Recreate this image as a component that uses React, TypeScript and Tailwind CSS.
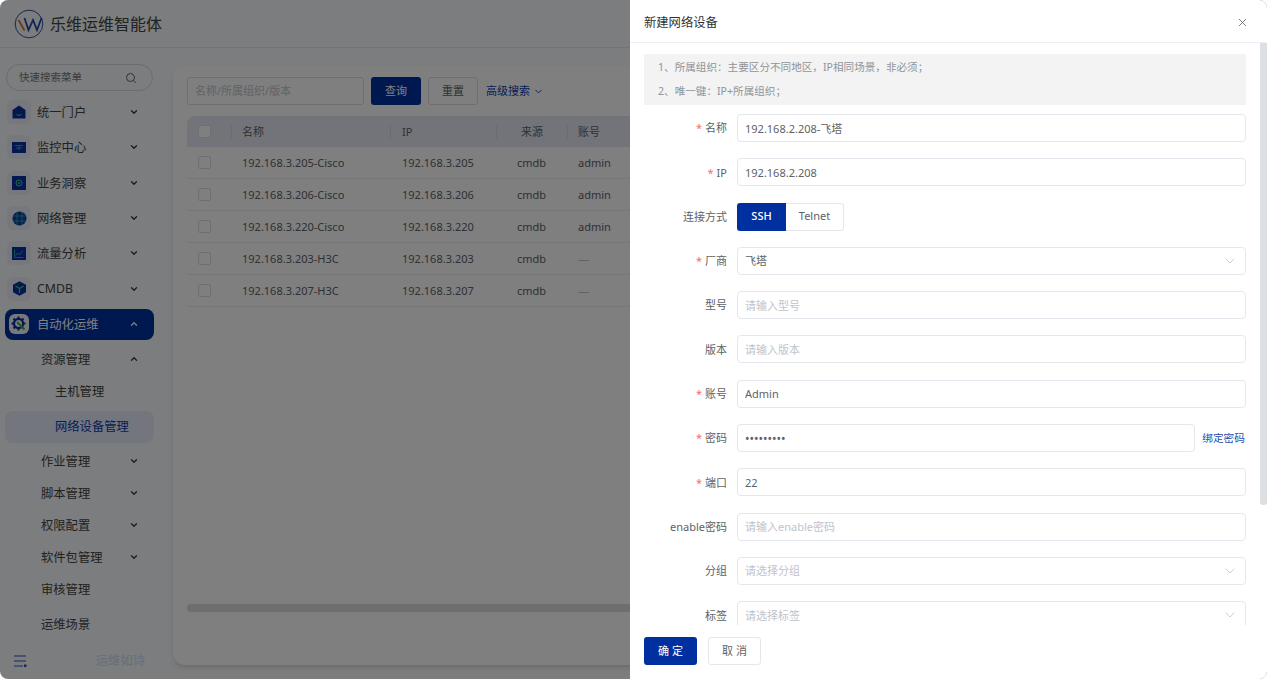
import { ChevronDown, ChevronUp, Search, X } from "lucide-react";

const FONT = "font-['Noto_Sans','Noto_Sans_CJK_SC',sans-serif]";

// ─── Sidebar icons ────────────────────────────────────────────────────────────

function Logo() {
  return (
    <svg width="30" height="30" viewBox="0 0 30 30" fill="none">
      <circle cx="15" cy="15" r="13.8" stroke="#2f4f9f" strokeWidth="1" />
      <path d="M4.5 11 10.5 21.5" stroke="#d9822b" strokeWidth="2" />
      <path d="M10.5 9 14.5 21 19 11 23 21 27.5 9" stroke="#2447a8" strokeWidth="1.8" />
    </svg>
  );
}

const tile = "w-[24px] h-[24px] shrink-0 rounded-md bg-[#eef0fb] flex items-center justify-center";

function PortalIcon() {
  return (
    <div className={tile}>
      <svg width="14" height="14" viewBox="0 0 14 14">
        <path d="M0.5 5 7 0.5 13.5 5V13.5H0.5Z" fill="#0a2f9e" />
        <path d="M4.5 9.5Q7 11.5 9.5 9.5" stroke="#3ecf9a" fill="none" />
      </svg>
    </div>
  );
}

function MonitorIcon() {
  return (
    <div className={tile}>
      <svg width="14" height="11" viewBox="0 0 14 11">
        <rect width="14" height="11" fill="#0a2f9e" />
        <path d="M3 3.5H11M7 3.5V8M4 6H10" stroke="#3ecf9a" strokeWidth="0.7" />
      </svg>
    </div>
  );
}

function InsightIcon() {
  return (
    <div className={tile}>
      <svg width="14" height="14" viewBox="0 0 14 14">
        <rect width="14" height="14" fill="#0a2f9e" />
        <circle cx="7" cy="7" r="3" stroke="#3ecf9a" fill="none" />
        <circle cx="7" cy="7" r="1" fill="#3ecf9a" />
      </svg>
    </div>
  );
}

function GlobeIcon() {
  return (
    <div className={tile}>
      <svg width="15" height="15" viewBox="0 0 15 15">
        <circle cx="7.5" cy="7.5" r="7" fill="#0a3a9e" />
        <path d="M0.5 5H14.5M0.5 10H14.5M5 0.8V14.2M10 0.8V14.2" stroke="#35c9a0" strokeWidth="0.7" />
      </svg>
    </div>
  );
}

function TrafficIcon() {
  return (
    <div className={tile}>
      <svg width="14" height="13" viewBox="0 0 14 13" fill="none">
        <rect width="14" height="13" fill="#0a2f9e" />
        <path d="M2.5 2.5V10.5H11.5" stroke="#3ecf9a" strokeWidth="0.7" />
        <path d="M3.5 8.5 6 6 8 7.5 11 3.5" stroke="#3ecf9a" strokeWidth="0.7" />
      </svg>
    </div>
  );
}

function CubeIcon() {
  return (
    <div className={tile}>
      <svg width="15" height="15" viewBox="0 0 15 15" fill="none">
        <path d="M7.5 0.3 14 3.8V11.2L7.5 14.7 1 11.2V3.8Z" fill="#0a2f9e" />
        <path d="M3.5 5 7.5 7.5 11.5 5M7.5 7.5V12" stroke="#3ecf6a" strokeWidth="1.2" />
      </svg>
    </div>
  );
}

function GearIcon() {
  return (
    <div className="w-[20px] h-[20px] shrink-0 rounded-md bg-[#f2f2f6] flex items-center justify-center">
      <svg width="16" height="16" viewBox="0 0 16 16" fill="none">
        <circle cx="7.5" cy="7.5" r="4.6" stroke="#0a2f9e" strokeWidth="2.2" />
        <path
          d="M7.5 0.5V2.5M7.5 12.5V14.5M0.5 7.5H2.5M12.5 7.5H14.5M2.5 2.5 4 4M11 11 12.5 12.5M12.5 2.5 11 4M4 11 2.5 12.5"
          stroke="#0a2f9e"
          strokeWidth="2"
        />
        <path d="M6 6 13.5 13.5" stroke="#35b34a" strokeWidth="2" />
      </svg>
    </div>
  );
}

// ─── Sidebar ──────────────────────────────────────────────────────────────────

function TopItem({ icon, label, open }: { icon: React.ReactNode; label: string; open?: boolean }) {
  const Arrow = open ? ChevronUp : ChevronDown;
  return (
    <div className="h-[35.3px] pl-[7px] pr-[21px] flex items-center">
      {icon}
      <span className="ml-[6px] pt-[2px] flex-1 text-[12.3px] text-[#444]">{label}</span>
      <Arrow size={10} strokeWidth={3} className="text-[#333]" />
    </div>
  );
}

function SubItem({ label, open, cls }: { label: string; open?: boolean; cls?: string }) {
  const Arrow = open ? ChevronUp : ChevronDown;
  return (
    <div className={`h-[32px] pl-[41px] pr-[21px] flex items-center ${cls ?? ""}`}>
      <span className="pt-[2px] flex-1 text-[12.3px] text-[#444]">{label}</span>
      {open !== undefined && <Arrow size={10} strokeWidth={3} className="text-[#333]" />}
    </div>
  );
}

function Sidebar() {
  return (
    <aside className="w-[160px] shrink-0 flex flex-col">
      <div className="ml-[6px] mr-[7px] mt-[16px] h-[27px] pl-[12px] pr-[15px] rounded-full border border-[#d5d8dc] flex items-center justify-between">
        <span className="text-[10.5px] text-[#777]">快速搜索菜单</span>
        <Search size={12} className="text-[#666]" />
      </div>
      <nav className="mt-[3.5px] flex flex-col">
        <TopItem icon={<PortalIcon />} label="统一门户" />
        <TopItem icon={<MonitorIcon />} label="监控中心" />
        <TopItem icon={<InsightIcon />} label="业务洞察" />
        <TopItem icon={<GlobeIcon />} label="网络管理" />
        <TopItem icon={<TrafficIcon />} label="流量分析" />
        <TopItem icon={<CubeIcon />} label="CMDB" />

        <div className="mt-[2.7px] ml-[5px] mr-[6px] h-[31px] pl-[4px] pr-[15px] rounded-lg bg-[#0030a0] flex items-center">
          <GearIcon />
          <span className="ml-[8px] pt-[2px] flex-1 text-[12.3px] text-white">自动化运维</span>
          <ChevronUp size={10} strokeWidth={3} className="text-white" />
        </div>

        <SubItem label="资源管理" open cls="mt-[3px]" />
        <div className="h-[32px] pl-[55px] pt-[2px] flex items-center text-[12.3px] text-[#444]">主机管理</div>
        <div className="mt-[4px] ml-[5px] mr-[6px] h-[32px] pl-[50px] rounded-lg bg-[#e6ecfa] flex items-center text-[12.3px] text-[#0d3bb0]">
          网络设备管理
        </div>
        <SubItem label="作业管理" open={false} cls="mt-[2px]" />
        <SubItem label="脚本管理" open={false} />
        <SubItem label="权限配置" open={false} />
        <SubItem label="软件包管理" open={false} />
        <SubItem label="审核管理" />
        <SubItem label="运维场景" cls="mt-[3px]" />
      </nav>
      <div className="mt-[5px] pl-[14px] pr-[15px] h-[32px] flex items-center justify-between">
        <svg width="13" height="12" viewBox="0 0 13 12" fill="none">
          <path d="M0 1H12M0 6H12M0 11H9" stroke="#2f55b8" strokeWidth="1.2" />
          <rect x="10" y="9.5" width="2.5" height="2.5" fill="#2f55b8" />
        </svg>
        <span className="text-[12.3px] text-[#d0dcfa]">运维如诗</span>
      </div>
    </aside>
  );
}

// ─── Table ────────────────────────────────────────────────────────────────────

const rows = [
  { name: "192.168.3.205-Cisco", ip: "192.168.3.205", account: "admin" },
  { name: "192.168.3.206-Cisco", ip: "192.168.3.206", account: "admin" },
  { name: "192.168.3.220-Cisco", ip: "192.168.3.220", account: "admin" },
  { name: "192.168.3.203-H3C", ip: "192.168.3.203", account: "—" },
  { name: "192.168.3.207-H3C", ip: "192.168.3.207", account: "—" },
];

const gridCols = "grid grid-cols-[44px_159px_106px_71px_1fr] items-center";
const checkbox = "ml-[11px] w-[13px] h-[13px] rounded-[2px] border border-[#dcdfe6] bg-white";
const headSep = "h-[14px] border-l border-[#d5d9e0] flex items-center";

function Content() {
  return (
    <main className="flex-1 min-w-0 pl-[13px] pr-[7px] pt-[18px] pb-[14px]">
      <div className="h-full rounded-xl bg-white shadow-md pl-[14px] pt-[11px] pb-[53px] flex flex-col">
        <div className="flex items-center h-[28px] text-[11px]">
          <div className="w-[177px] h-full px-[7px] rounded-[3px] border border-[#dcdfe6] flex items-center text-[#c0c4cc]">
            名称/所属组织/版本
          </div>
          <div className="ml-[7px] w-[50px] h-full rounded-[3px] bg-[#0030a0] text-white flex items-center justify-center">查询</div>
          <div className="ml-[7px] w-[50px] h-full rounded-[3px] border border-[#dcdfe6] text-[#606266] flex items-center justify-center">重置</div>
          <div className="ml-[8px] text-[#0d3bb0] flex items-center gap-[3px]">
            高级搜索
            <ChevronDown size={11} />
          </div>
        </div>

        <div className="mt-[11px] text-[11px] text-[#606266]">
          <div className={`${gridCols} h-[31px] rounded-t-lg bg-[#e5e9f3]`}>
            <div className={checkbox} />
            <div className={`${headSep} pl-[10px] pt-[1px]`}>名称</div>
            <div className={`${headSep} pl-[11px] pt-[1px]`}>IP</div>
            <div className={`${headSep} justify-center pt-[1px]`}>来源</div>
            <div className={`${headSep} pl-[10px] pt-[1px]`}>账号</div>
          </div>
          {rows.map(r => (
            <div key={r.name} className={`${gridCols} h-[32px] border-b border-[#ebeef5]`}>
              <div className={checkbox} />
              <div className="pl-[11px] pt-[2px]">{r.name}</div>
              <div className="pl-[12px] pt-[2px]">{r.ip}</div>
              <div className="text-center pt-[2px]">cmdb</div>
              <div className={`pl-[11px] pt-[2px] ${r.account === "—" ? "text-[#c0c4cc]" : ""}`}>{r.account}</div>
            </div>
          ))}
        </div>

        <div className="mt-auto h-[8px] rounded-full bg-[#dcdcdf]" />
      </div>
    </main>
  );
}

// ─── Drawer form ──────────────────────────────────────────────────────────────

function Label({ text, required }: { text: string; required?: boolean }) {
  return (
    <label className="w-[83px] shrink-0 pt-[1px] text-right text-[11px] text-[#606266]">
      {required && <span className="text-[#f56c6c] mr-[3px]">*</span>}
      {text}
    </label>
  );
}

const inputCls =
  "w-full h-[28px] px-[7px] rounded-[4px] border border-[#e4e7ed] bg-white text-[11px] text-[#606266] placeholder:text-[#c0c4cc] outline-none";

function Field({
  label,
  required,
  value,
  placeholder,
}: {
  label: string;
  required?: boolean;
  value?: string;
  placeholder?: string;
}) {
  return (
    <div className="flex items-center gap-[10px] mb-[16.3px]">
      <Label text={label} required={required} />
      <input className={inputCls} readOnly value={value ?? ""} placeholder={placeholder} />
    </div>
  );
}

function SelectField({
  label,
  required,
  value,
  placeholder,
}: {
  label: string;
  required?: boolean;
  value?: string;
  placeholder?: string;
}) {
  return (
    <div className="flex items-center gap-[10px] mb-[16.3px]">
      <Label text={label} required={required} />
      <div className="flex-1 h-[28px] pl-[7px] pr-[7px] rounded-[4px] border border-[#e4e7ed] bg-white flex items-center justify-between text-[11px]">
        <span className={`pt-[1px] ${value ? "text-[#606266]" : "text-[#c0c4cc]"}`}>{value ?? placeholder}</span>
        <ChevronDown size={16} strokeWidth={1} className="text-[#b0b4bc]" />
      </div>
    </div>
  );
}

function Drawer() {
  return (
    <div className="absolute top-0 right-0 bottom-0 w-[637px] bg-white flex flex-col">
      <div className="h-[43px] shrink-0 pl-[14px] pr-[18px] border-b border-[#ebeef5] flex items-center justify-between">
        <span className="mt-[5px] text-[12.3px] text-[#303133]">新建网络设备</span>
        <X size={13} strokeWidth={1.5} className="mt-[2px] text-[#606266]" />
      </div>

      <div className="relative flex-1 min-h-0 overflow-hidden pl-[14px] pr-[21px] pt-[11px]">
        <div className="absolute right-0 top-0 w-[7px] h-[462px] rounded-b-[3px] bg-[#dcdfe3]" />

        <div className="h-[51px] mb-[9px] pl-[14px] pt-[1px] bg-[#f3f3f3] text-[10.6px] leading-[24px] text-[#909399]">
          <p>1、所属组织：主要区分不同地区，IP相同场景，非必须；</p>
          <p>2、唯一键：IP+所属组织；</p>
        </div>

        <Field label="名称" required value="192.168.2.208-飞塔" />
        <Field label="IP" required value="192.168.2.208" />

        <div className="flex items-center gap-[10px] mb-[16.3px]">
          <Label text="连接方式" />
          <div className="flex h-[28px] text-[11px]">
            <div className="w-[49px] rounded-l-[3px] bg-[#0030a0] text-white font-medium flex items-center justify-center">SSH</div>
            <div className="w-[58px] rounded-r-[3px] border border-l-0 border-[#e4e7ed] text-[#606266] flex items-center justify-center">Telnet</div>
          </div>
        </div>

        <SelectField label="厂商" required value="飞塔" />
        <Field label="型号" placeholder="请输入型号" />
        <Field label="版本" placeholder="请输入版本" />
        <Field label="账号" required value="Admin" />

        <div className="flex items-center gap-[10px] mb-[16.3px]">
          <Label text="密码" required />
          <input className={`${inputCls} flex-1 min-w-0 !text-[12px]`} type="password" readOnly value="123456789" />
          <span className="shrink-0 -ml-[3px] mr-[1px] text-[10.7px] text-[#1f49ad]">绑定密码</span>
        </div>

        <Field label="端口" required value="22" />
        <Field label="enable密码" placeholder="请输入enable密码" />
        <SelectField label="分组" placeholder="请选择分组" />
        <SelectField label="标签" placeholder="请选择标签" />
      </div>

      <div className="h-[54px] shrink-0 pl-[14px] pt-[12px] flex gap-[11px] text-[11px]">
        <div className="w-[53px] h-[28px] pl-[3px] rounded-[3px] bg-[#0030a0] text-white flex items-center justify-center tracking-[3px]">确定</div>
        <div className="w-[53px] h-[28px] pl-[3px] rounded-[3px] border border-[#e4e7ed] text-[#606266] flex items-center justify-center tracking-[3px]">取消</div>
      </div>
    </div>
  );
}

export default function App() {
  return (
    <div className={`relative w-[1267px] h-[679px] overflow-hidden rounded-lg bg-[#f6fafc] flex flex-col ${FONT}`}>
      <header className="h-[48px] shrink-0 pl-[14px] border-b border-[#e3e6e8] flex items-center gap-[6px]">
        <Logo />
        <span className="text-[16px] text-[#444]">乐维运维智能体</span>
      </header>
      <div className="flex-1 min-h-0 flex">
        <Sidebar />
        <Content />
      </div>

      {/* modal mask + drawer */}
      <div className="absolute inset-0 bg-black/50" />
      <Drawer />
    </div>
  );
}
